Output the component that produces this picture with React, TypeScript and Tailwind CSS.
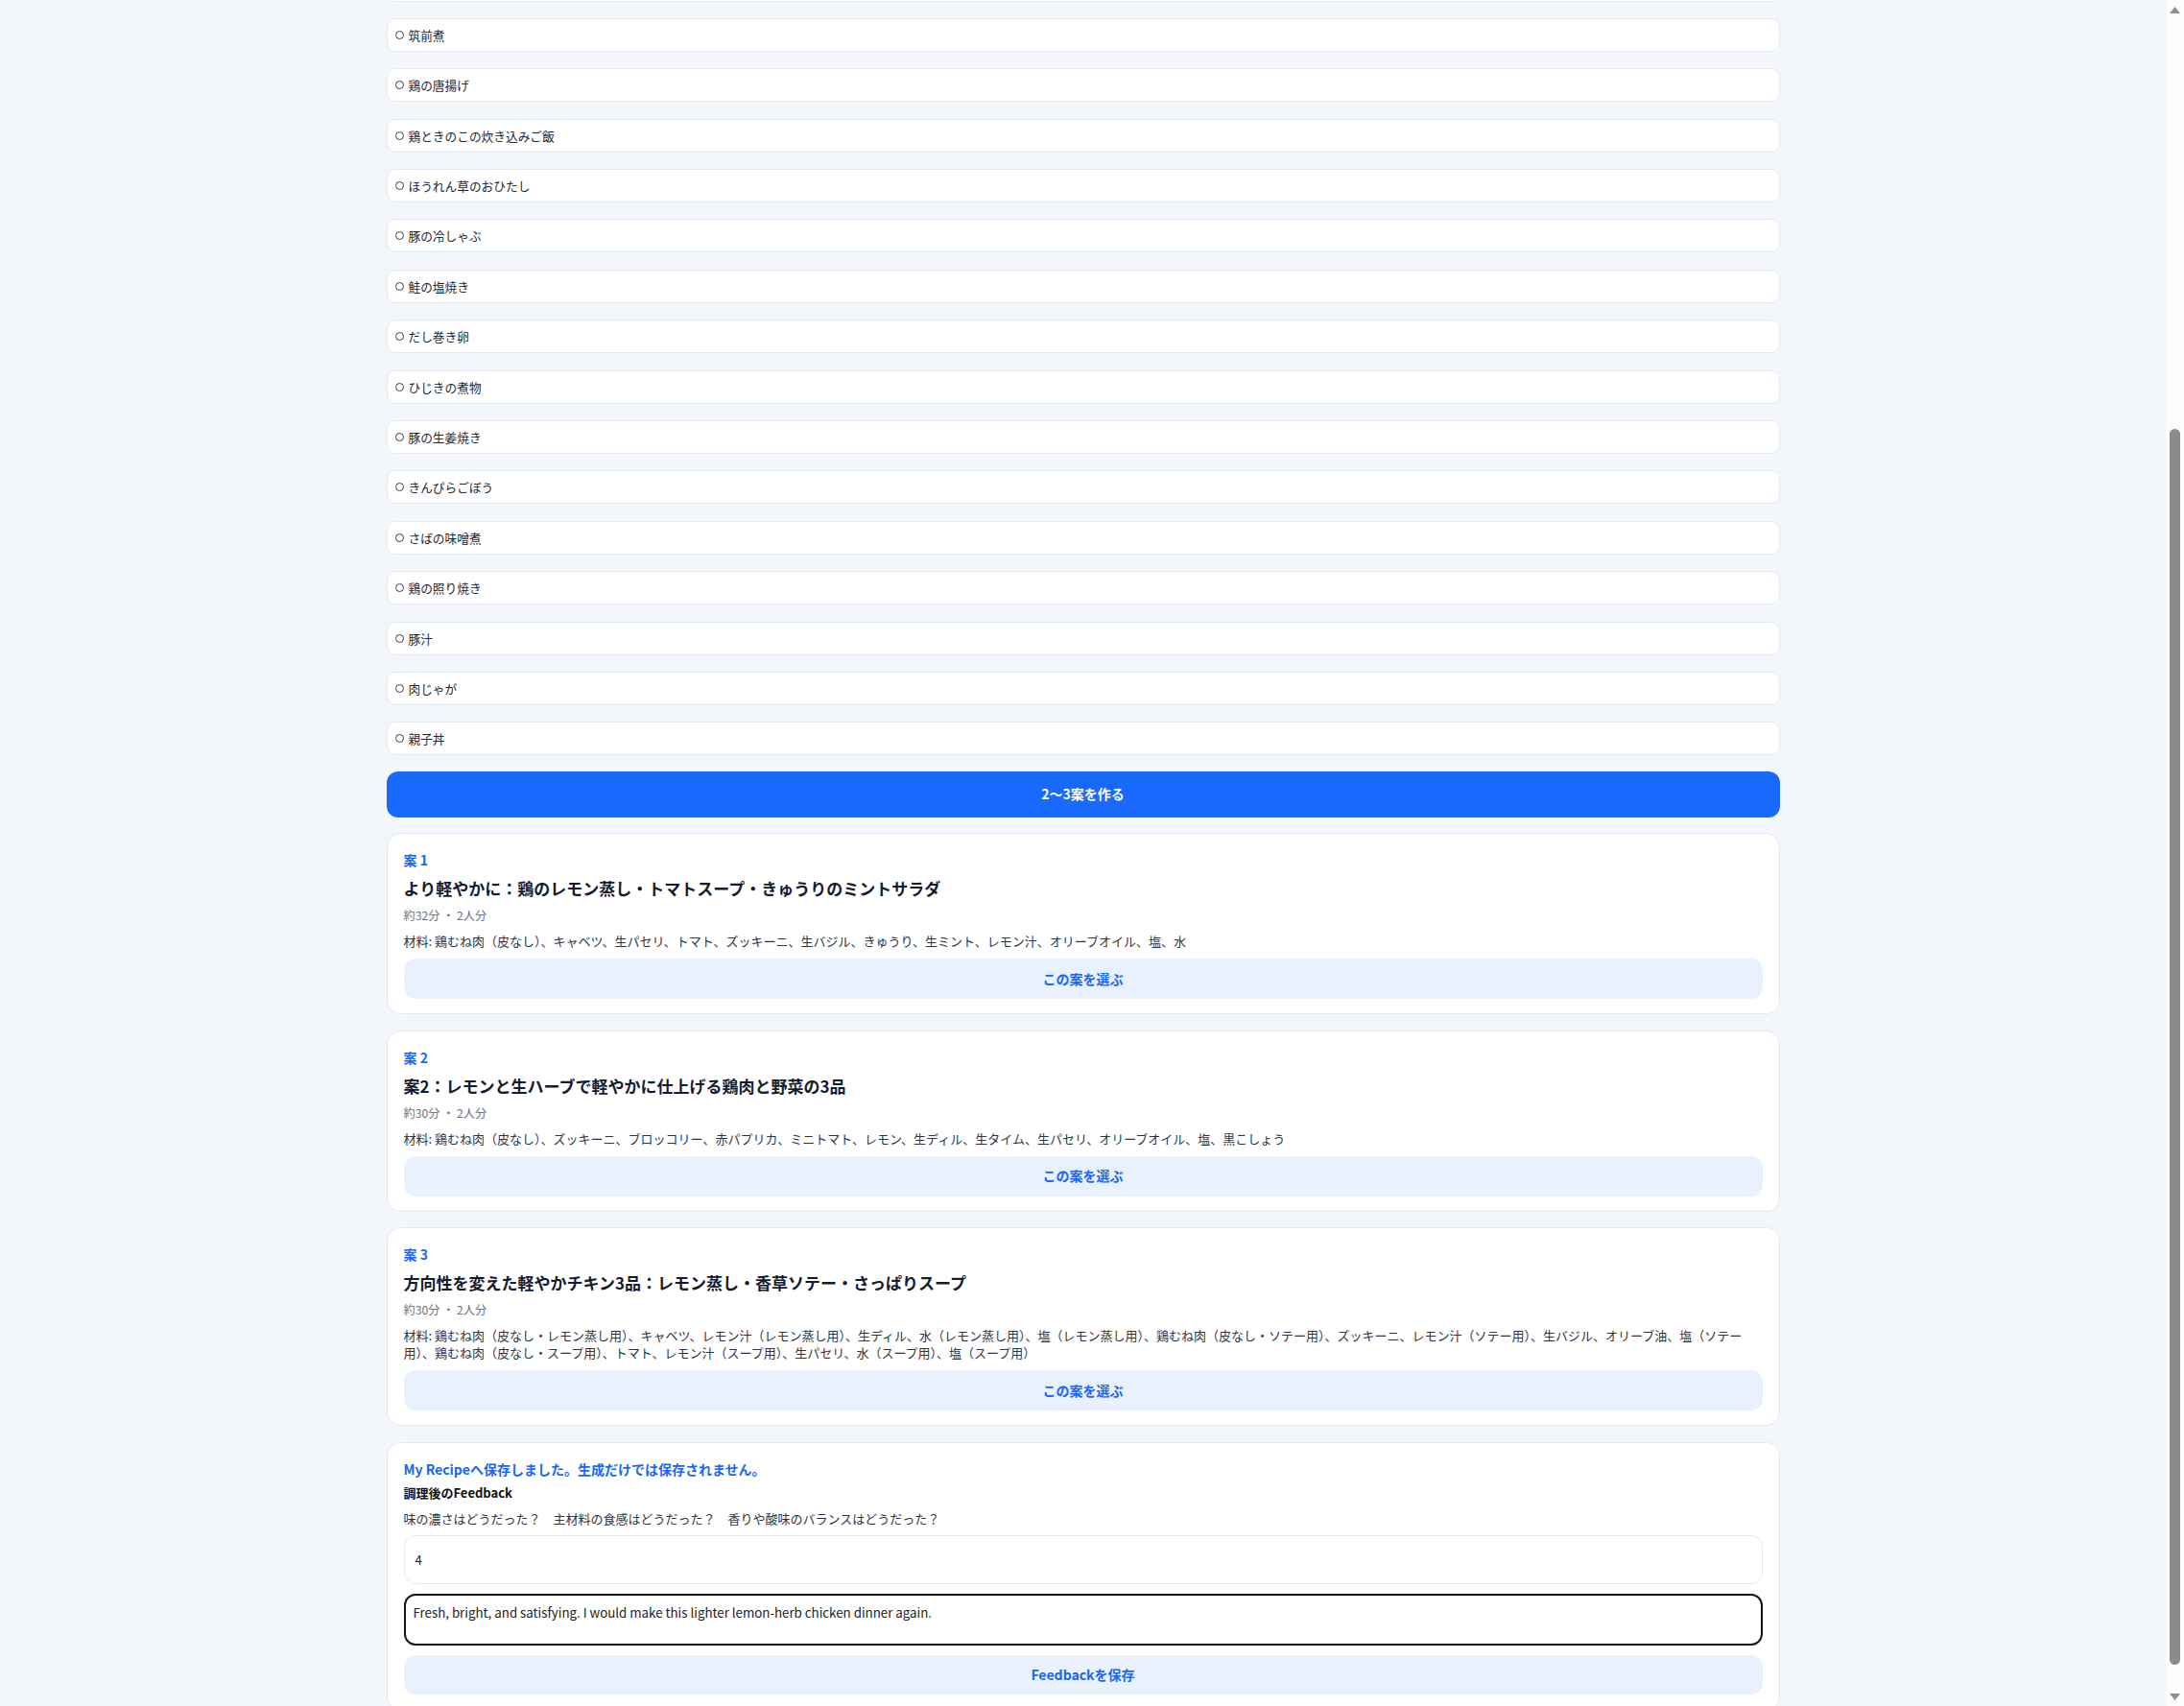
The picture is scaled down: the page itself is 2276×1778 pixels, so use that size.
import React from "react";

const dishes = [
  "ぶり大根",
  "筑前煮",
  "鶏の唐揚げ",
  "鶏ときのこの炊き込みご飯",
  "ほうれん草のおひたし",
  "豚の冷しゃぶ",
  "鮭の塩焼き",
  "だし巻き卵",
  "ひじきの煮物",
  "豚の生姜焼き",
  "きんぴらごぼう",
  "さばの味噌煮",
  "鶏の照り焼き",
  "豚汁",
  "肉じゃが",
  "親子丼",
];

const plans = [
  {
    label: "案 1",
    title: "より軽やかに：鶏のレモン蒸し・トマトスープ・きゅうりのミントサラダ",
    meta: "約32分 ・ 2人分",
    items:
      "材料: 鶏むね肉（皮なし）、キャベツ、生パセリ、トマト、ズッキーニ、生バジル、きゅうり、生ミント、レモン汁、オリーブオイル、塩、水",
  },
  {
    label: "案 2",
    title: "案2：レモンと生ハーブで軽やかに仕上げる鶏肉と野菜の3品",
    meta: "約30分 ・ 2人分",
    items:
      "材料: 鶏むね肉（皮なし）、ズッキーニ、ブロッコリー、赤パプリカ、ミニトマト、レモン、生ディル、生タイム、生パセリ、オリーブオイル、塩、黒こしょう",
  },
  {
    label: "案 3",
    title: "方向性を変えた軽やかチキン3品：レモン蒸し・香草ソテー・さっぱりスープ",
    meta: "約30分 ・ 2人分",
    items:
      "材料: 鶏むね肉（皮なし・レモン蒸し用）、キャベツ、レモン汁（レモン蒸し用）、生ディル、水（レモン蒸し用）、塩（レモン蒸し用）、鶏むね肉（皮なし・ソテー用）、ズッキーニ、レモン汁（ソテー用）、生バジル、オリーブ油、塩（ソテー用）、鶏むね肉（皮なし・スープ用）、トマト、レモン汁（スープ用）、生パセリ、水（スープ用）、塩（スープ用）",
  },
];

function DishRow({ name }: { name: string }) {
  return (
    <label className="flex h-[35px] items-center gap-[5px] rounded-[9px] border border-[#e4e9f1] bg-white pl-[8px] text-[12.7px] text-[#222834]">
      <span className="h-[9px] w-[9px] shrink-0 rounded-full border-[1.5px] border-[#3a3f48]" />
      <span>{name}</span>
    </label>
  );
}

function PlanCard({ plan }: { plan: (typeof plans)[number] }) {
  return (
    <section className="rounded-[14px] border border-[#e2e8f1] bg-white px-[17px] pb-[15px] pt-[17px]">
      <p className="text-[14px] font-bold leading-[20px] text-[#1a66f5]">{plan.label}</p>
      <h3 className="mt-[8px] text-[17px] font-bold leading-[24px] text-[#141b2e]">{plan.title}</h3>
      <p className="mt-[7px] text-[12.2px] leading-[18px] text-[#6b7280]">{plan.meta}</p>
      <p className="mt-[9px] text-[13px] leading-[18px] text-[#2f3440]">{plan.items}</p>
      <button
        type="button"
        className="mt-[9px] flex h-[42px] w-full items-center justify-center rounded-[12px] bg-[#e9f1fe] text-[14px] font-bold text-[#1a66f5]"
      >
        この案を選ぶ
      </button>
    </section>
  );
}

function Scrollbar() {
  return (
    <div className="flex w-[19px] shrink-0 flex-col items-center bg-[#fcfcfc]">
      <div className="flex h-[20px] items-center justify-center">
        <svg width="11" height="7" viewBox="0 0 11 7" aria-hidden>
          <path d="M5.5 0L11 7H0z" fill="#8e8e8e" />
        </svg>
      </div>
      <div className="mt-[427px] h-[1288px] w-[11px] rounded-full bg-[#8b8b8b]" />
      <div className="flex-1" />
      <div className="flex h-[20px] items-center justify-center">
        <svg width="11" height="7" viewBox="0 0 11 7" aria-hidden>
          <path d="M0 0H11L5.5 7z" fill="#8e8e8e" />
        </svg>
      </div>
    </div>
  );
}

export default function App() {
  return (
    <div className="flex h-[1778px] w-full overflow-hidden bg-[#f3f7fc] font-['Noto_Sans_CJK_JP','Noto_Sans',sans-serif]">
      <main className="min-w-0 flex-1 overflow-hidden">
        <div className="mx-auto -mt-[33.5px] flex w-[1452px] flex-col gap-[16.5px]">
          <div className="flex flex-col gap-[17.4px]">
            {dishes.map((d) => (
              <DishRow key={d} name={d} />
            ))}
          </div>

          <button
            type="button"
            className="flex h-[48px] w-full items-center justify-center rounded-[12px] bg-[#1a69fd] text-[14px] font-bold text-white"
          >
            2〜3案を作る
          </button>

          {plans.map((p) => (
            <PlanCard key={p.label} plan={p} />
          ))}

          <section className="rounded-[14px] border border-[#e2e8f1] bg-white px-[17px] pb-[16px] pt-[17px]">
            <p className="text-[14px] font-bold leading-[20px] text-[#1a66f5]">
              My Recipeへ保存しました。生成だけでは保存されません。
            </p>
            <p className="mt-[6px] text-[13px] font-bold leading-[18px] text-[#111]">調理後のFeedback</p>
            <p className="mt-[9px] text-[13px] leading-[18px] text-[#2f3440]">
              味の濃さはどうだった？　主材料の食感はどうだった？　香りや酸味のバランスはどうだった？
            </p>
            <div className="mt-[8px] flex h-[51px] items-center rounded-[12px] border border-[#e3e8f0] bg-white px-[11px] text-[13px] text-[#222]">
              4
            </div>
            <div className="mt-[10px] h-[54px] rounded-[12px] border-2 border-[#151515] bg-white px-[8px] pt-[9px] text-[13.3px] leading-[18px] text-[#222]">
              Fresh, bright, and satisfying. I would make this lighter lemon-herb chicken dinner again.
            </div>
            <button
              type="button"
              className="mt-[10px] flex h-[41px] w-full items-center justify-center rounded-[12px] bg-[#e9f1fe] text-[14px] font-bold text-[#1a66f5]"
            >
              Feedbackを保存
            </button>
          </section>
        </div>
      </main>
      <Scrollbar />
    </div>
  );
}
